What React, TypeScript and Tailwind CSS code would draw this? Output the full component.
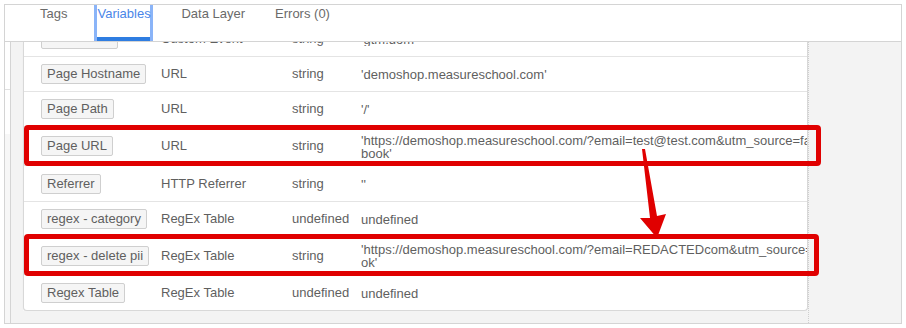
const rows = [
  { name: "Custom Event", type: "Custom Event", dtype: "string", value: ["'gtm.dom'"], h: "h-[35px]", partial: true },
  { name: "Page Hostname", type: "URL", dtype: "string", value: ["'demoshop.measureschool.com'"], h: "h-[35px]" },
  { name: "Page Path", type: "URL", dtype: "string", value: ["'/'"], h: "h-[35px]" },
  {
    name: "Page URL",
    type: "URL",
    dtype: "string",
    value: ["'https://demoshop.measureschool.com/?email=test@test.com&utm_source=face", "book'"],
    h: "h-[39px]",
  },
  { name: "Referrer", type: "HTTP Referrer", dtype: "string", value: ["''"], h: "h-[36px]" },
  { name: "regex - category", type: "RegEx Table", dtype: "undefined", value: ["undefined"], h: "h-[35px]" },
  {
    name: "regex - delete pii",
    type: "RegEx Table",
    dtype: "string",
    value: ["'https://demoshop.measureschool.com/?email=REDACTEDcom&utm_source=facebo", "ok'"],
    h: "h-[38px]",
  },
  { name: "Regex Table", type: "RegEx Table", dtype: "undefined", value: ["undefined"], h: "h-[36px]", last: true },
];

function Row({ r }: { r: (typeof rows)[number] }) {
  return (
    <div
      className={`flex items-center pl-[17px] text-[13px] text-[#5f5f5f] shrink-0 ${r.h} ${
        r.last ? "" : "border-b border-[#e4e4e4]"
      } ${r.partial ? "-mt-[20px]" : ""}`}
    >
      <div className="w-[120px] shrink-0">
        <span className="inline-block px-[5px] py-[1px] leading-[16px] border border-[#cfcfcf] bg-[#f5f5f5] rounded-[2px] whitespace-nowrap">
          {r.partial ? "\u00a0".repeat(18) : r.name}
        </span>
      </div>
      <div className="w-[131px] shrink-0 whitespace-nowrap">{r.type}</div>
      <div className="w-[69px] shrink-0 whitespace-nowrap">{r.dtype}</div>
      <div className="flex-1 min-w-0 overflow-hidden leading-[13px] pt-[1px]">
        {r.value.map((v, i) => (
          <div key={i} className="whitespace-nowrap">
            {v}
          </div>
        ))}
      </div>
    </div>
  );
}

export default function App() {
  return (
    <div
      className="relative w-[906px] h-[328px] bg-white overflow-hidden"
      style={{ fontFamily: '"Liberation Sans", Arial, sans-serif' }}
    >
      <div className="ml-[4px] mt-[4px] w-[898px] h-[320px] border border-[#d4d4d4] flex flex-col">
        {/* tabs */}
        <div className="h-[37px] shrink-0 border-b border-[#d4d4d4] flex text-[13px] leading-[18px] text-[#6a6a6a]">
          <div className="pl-[35px]">Tags</div>
          <div className="ml-[27px] w-[59px] h-full border-x-[3px] border-[#8ab4f8] flex flex-col">
            <div className="flex-1 text-[#4a86e8] text-center">Variables</div>
            <div className="h-[4px] bg-[#2f7de1]" />
          </div>
          <div className="ml-[28px]">Data Layer</div>
          <div className="ml-[30px]">Errors (0)</div>
        </div>

        {/* body */}
        <div className="flex flex-1 min-h-0">
          <div className="w-[6px] shrink-0 flex flex-col border-r border-[#d4d4d4]">
            <div className="h-[48px] border-b border-[#e0e0e0]" />
            <div className="h-[44px]" />
            <div className="flex-1 bg-[#f7f7f7]" />
          </div>
          <div className="w-[12px] shrink-0 bg-[#f3f3f3]" />
          <div className="w-[785px] shrink-0 flex flex-col">
            <div className="h-[269px] bg-white border-x border-b border-[#d8d8d8] rounded-b-[4px] overflow-hidden flex flex-col shadow-[0_1px_1px_rgba(0,0,0,0.08)]">
              {rows.map((r) => (
                <Row key={r.name} r={r} />
              ))}
            </div>
            <div className="flex-1 bg-[#f3f3f3]" />
          </div>
          <div className="flex-1 bg-[#f3f3f3] border-l border-dotted border-[#cfcfcf]" />
        </div>
      </div>

      {/* highlight annotations */}
      <div className="absolute left-[24px] top-[125px] w-[797px] h-[41px] border-[5px] border-[#e00000] rounded-[4px]" />
      <div className="absolute left-[24px] top-[234px] w-[795px] h-[42px] border-[5px] border-[#e00000] rounded-[4px]" />
      <svg className="absolute left-0 top-0" width="906" height="328" viewBox="0 0 906 328">
        <polygon points="642,149 645,149 657,216 666,214 657,238 640,218 650,218" fill="#e00000" />
      </svg>
    </div>
  );
}
